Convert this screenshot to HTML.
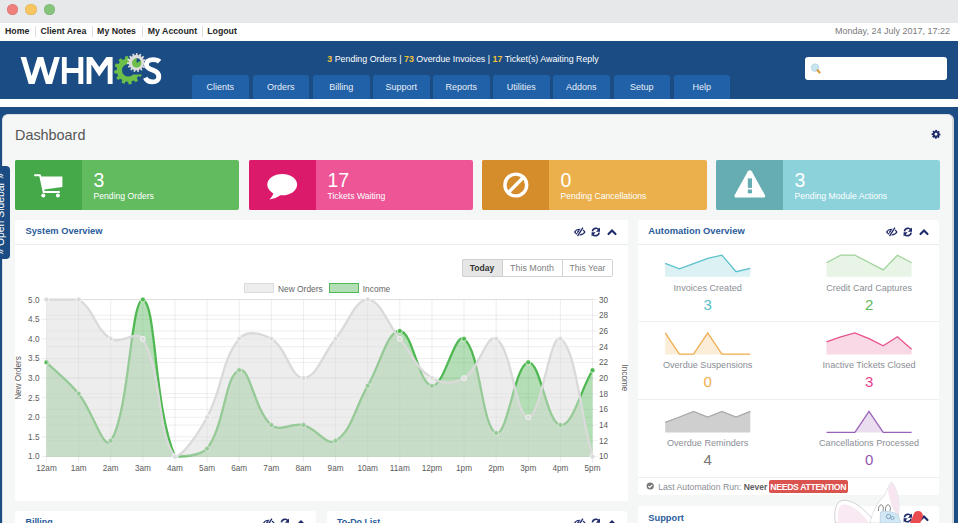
<!DOCTYPE html>
<html><head><meta charset="utf-8">
<style>
*{box-sizing:border-box;margin:0;padding:0}
html,body{width:958px;height:523px;overflow:hidden;background:#fff;font-family:"Liberation Sans",sans-serif}
.abs{position:absolute}
#macbar{left:0;top:0;width:958px;height:23px;background:#e6e8ea}
.dot{position:absolute;top:3.65px;width:11.6px;height:11.6px;border-radius:50%;box-shadow:inset 0 0 0 0.5px rgba(0,0,0,0.12)}
#topbar{left:0;top:23px;width:958px;height:18px;background:#fff}
.tl{position:absolute;top:25.4px;font-size:8.75px;font-weight:bold;color:#262626;white-space:nowrap;line-height:12px}
.tsep{position:absolute;top:26px;width:1px;height:11px;background:#dedede}
#date{right:8px;top:25px;font-size:9px;color:#7a7a7a;white-space:nowrap;line-height:12px}
#header{left:0;top:41px;width:958px;height:58px;background:#1b4d84}
#status{left:0;width:926px;top:52.5px;text-align:center;font-size:8.87px;color:#fff;white-space:nowrap;line-height:12px}
#status b{color:#f3c234}
.tab{position:absolute;top:75px;width:56.7px;height:24px;background:#2061a8;border-radius:3px 3px 0 0;color:#e9eff6;font-size:9px;text-align:center;line-height:25px}
#search{left:805px;top:57px;width:142px;height:22.5px;background:#fff;border-radius:3px}
#stripe{left:0;top:99px;width:958px;height:7.4px;background:#fff}
#bluebg{left:0;top:106.5px;width:958px;height:417px;background:#1b4d84}
#content{left:2px;top:113.6px;width:952px;height:420px;background:#f5f7f7;border-radius:6px;border:1px solid #dcdfe2;border-right:2px solid #d6d9dc}
#title{left:15px;top:125.8px;font-size:14.4px;color:#555;white-space:nowrap;line-height:18px}
.box{position:absolute;top:160px;height:49.5px;border-radius:2px;overflow:hidden}
.box .ic{position:absolute;left:0;top:0;width:67px;height:100%}
.box .num{position:absolute;left:78px;top:167.5px;font-size:19.5px;color:#fff;line-height:24px}
.box .lbl{position:absolute;left:78px;top:190px;font-size:8.65px;color:#fff;white-space:nowrap;line-height:12px}
.panel{position:absolute;background:#fff;border-radius:3px}
.ph{position:absolute;left:0;top:0;width:100%;height:24.7px;border-bottom:1px solid #e9ebed}
.pt{position:absolute;left:10.5px;top:6px;font-size:9.3px;font-weight:bold;color:#2a5c9c;white-space:nowrap;line-height:12px}
.auto{position:absolute;text-align:center;width:150px}
.auto .al{font-size:9.1px;color:#8a8d93;white-space:nowrap;line-height:12px}
.auto .av{font-size:15px;line-height:16px}
</style></head><body>
<div id="macbar" class="abs">
 <div class="dot" style="left:6.55px;background:#ef7f7a"></div>
 <div class="dot" style="left:25.2px;background:#f8c661"></div>
 <div class="dot" style="left:43.8px;background:#85c57b"></div>
</div>
<div id="topbar" class="abs"></div>
<div class="tl" style="left:5px">Home</div><div class="tsep" style="left:35px"></div>
<div class="tl" style="left:40.4px">Client Area</div><div class="tsep" style="left:92.2px"></div>
<div class="tl" style="left:97.1px">My Notes</div><div class="tsep" style="left:142.3px"></div>
<div class="tl" style="left:147.8px">My Account</div><div class="tsep" style="left:202.3px"></div>
<div class="tl" style="left:207.2px">Logout</div>
<div id="date" class="abs">Monday, 24 July 2017, 17:22</div>
<div id="header" class="abs"></div>
<svg class="abs" style="left:0;top:41px" width="200" height="58" viewBox="0 41 200 58">
<g fill="#fff">
<path d="M20.6,56.9 L26.1,56.9 L31.6,76.1 L37.5,56.9 L43.3,56.9 L48.5,76.1 L54.4,56.9 L59.9,56.9 L52.1,83.9 L45.9,83.9 L40.4,66 L34.6,83.9 L28.7,83.9 Z"/>
<path d="M61.9,56.9 H66.7 V68 H78.4 V56.9 H83.3 V83.9 H78.4 V72.9 H66.7 V83.9 H61.9 Z"/>
<path d="M86.6,83.9 L86.6,56.9 L92.2,56.9 L99.2,67 L106.4,56.9 L112.6,56.9 L112.6,83.9 L107.7,83.9 L107.7,64.6 L99.2,76.4 L91.4,64.6 L91.4,83.9 Z"/>
</g>
<path d="M139.60,72.81 L141.91,74.26 L140.84,76.87 L138.18,76.28 L136.78,78.11 L138.06,80.52 L135.82,82.24 L133.82,80.40 L131.69,81.29 L131.59,84.01 L128.80,84.39 L127.98,81.80 L125.69,81.50 L124.24,83.81 L121.63,82.74 L122.22,80.08 L120.39,78.68 L117.98,79.96 L116.26,77.72 L118.10,75.72 L117.21,73.59 L114.49,73.49 L114.11,70.70 L116.70,69.88 L117.00,67.59 L114.69,66.14 L115.76,63.53 L118.42,64.12 L119.82,62.29 L118.54,59.88 L120.78,58.16 L122.78,60.00 L124.91,59.11 L125.01,56.39 L127.80,56.01 L128.62,58.60 L130.91,58.90 L132.36,56.59 L134.97,57.66 L134.38,60.32 L136.21,61.72 L138.62,60.44 L140.34,62.68 L138.50,64.68 L139.39,66.81 L142.11,66.91 L142.49,69.70 L139.90,70.52 Z M134.60,70.20 A6.3,6.3 0 1,0 122.00,70.20 A6.3,6.3 0 1,0 134.60,70.20 Z" fill="#6cc04a" fill-rule="evenodd"/>
<path d="M128.3,70.2 L133,74.4 L150,74.4 L150,52 L133,52 Z" fill="#1b4d84"/>
<path d="M144.10,62.60 L145.99,63.08 L145.79,64.58 L143.85,64.55 L143.44,65.69 L144.97,66.90 L144.19,68.18 L142.42,67.37 L141.59,68.25 L142.49,69.97 L141.25,70.83 L139.96,69.36 L138.85,69.83 L138.98,71.77 L137.49,72.05 L136.91,70.19 L135.71,70.16 L135.03,71.99 L133.56,71.64 L133.79,69.70 L132.70,69.18 L131.34,70.58 L130.14,69.66 L131.14,67.99 L130.35,67.07 L128.54,67.79 L127.82,66.46 L129.41,65.34 L129.07,64.18 L127.12,64.11 L127.00,62.60 L128.91,62.22 L129.07,61.02 L127.32,60.16 L127.82,58.74 L129.72,59.16 L130.35,58.13 L129.10,56.64 L130.14,55.54 L131.70,56.70 L132.70,56.02 L132.17,54.14 L133.56,53.56 L134.52,55.26 L135.71,55.04 L135.98,53.11 L137.49,53.15 L137.67,55.09 L138.85,55.37 L139.89,53.72 L141.25,54.37 L140.63,56.22 L141.59,56.95 L143.20,55.87 L144.19,57.02 L142.87,58.45 L143.44,59.51 L145.36,59.18 L145.79,60.62 L144.00,61.40 Z" fill="#dcdcdc"/>
<circle cx="136.6" cy="63" r="4.7" fill="#6cc04a"/>
<path d="M136.6,63 L136.6,58.3 A4.7,4.7 0 0,1 140.7,60.7 Z" fill="#1b4d84"/>
<path d="M159.6,61.6 C157.8,59.9 155.2,59.6 152.8,59.6 C149,59.6 146.4,61.4 146.4,64.6 C146.4,68.2 150,69.3 152.9,70.2 C156.1,71.2 158.8,72.6 158.8,76.9 C158.8,80.1 156.1,81.9 152.5,81.9 C149.2,81.9 146.6,80.6 145.3,77.8" fill="none" stroke="#fff" stroke-width="4.9"/>
</svg>
<div id="status" class="abs"><b>3</b> Pending Orders | <b>73</b> Overdue Invoices | <b>17</b> Ticket(s) Awaiting Reply</div>
<div class="tab" style="left:192px">Clients</div>
<div class="tab" style="left:252.5px">Orders</div>
<div class="tab" style="left:313px">Billing</div>
<div class="tab" style="left:373px">Support</div>
<div class="tab" style="left:433px">Reports</div>
<div class="tab" style="left:493px">Utilities</div>
<div class="tab" style="left:553px">Addons</div>
<div class="tab" style="left:613.5px">Setup</div>
<div class="tab" style="left:673.5px">Help</div>
<div id="search" class="abs"><svg width="30" height="23" style="position:absolute;left:0;top:0"><circle cx="10.1" cy="10.6" r="3.9" fill="#c8e4ee" stroke="#b4d3df" stroke-width="0.6"/><path d="M12.6,13.2 L14.6,15.4" stroke="#d99b3c" stroke-width="2.2" stroke-linecap="round"/></svg></div>
<div id="stripe" class="abs"></div>
<div id="bluebg" class="abs"></div>
<div id="content" class="abs"></div>
<div id="title" class="abs">Dashboard</div>
<svg class="abs" style="left:926px;top:124px" width="20" height="20" viewBox="926 124 20 20"><path d="M939.30,133.48 L940.45,133.63 L940.37,135.38 L939.21,135.42 L938.91,136.05 L939.62,136.97 L938.32,138.15 L937.47,137.36 L936.82,137.60 L936.67,138.75 L934.92,138.67 L934.88,137.51 L934.25,137.21 L933.33,137.92 L932.15,136.62 L932.94,135.77 L932.70,135.12 L931.55,134.97 L931.63,133.22 L932.79,133.18 L933.09,132.55 L932.38,131.63 L933.68,130.45 L934.53,131.24 L935.18,131.00 L935.33,129.85 L937.08,129.93 L937.12,131.09 L937.75,131.39 L938.67,130.68 L939.85,131.98 L939.06,132.83 Z M937.45,134.30 A1.45,1.45 0 1,0 934.55,134.30 A1.45,1.45 0 1,0 937.45,134.30 Z" fill="#1e2a69" fill-rule="evenodd"/></svg>
<div class="box" style="left:15px;width:224px;background:#62bb5f"><div class="ic" style="background:#45a94a"><svg width="67" height="50" viewBox="15 160 67 50" style="position:absolute;left:0;top:0"><g fill="#fff">
<path d="M34.2,174.3 H39.6 C40.4,174.3 40.9,174.7 41.1,175.4 L41.3,176.4 H62.4 V186.9 L44.3,189.5 L44.6,191 H59.8 V193 H42.9 L39.3,176.3 H34.2 Z"/>
<circle cx="43.3" cy="195.6" r="2"/><circle cx="57.9" cy="195.6" r="2"/></g></svg></div></div>
<div class="box" style="left:249px;width:224px;background:#ee5597"><div class="ic" style="background:#db1a6c"><svg width="67" height="50" viewBox="249 160 67 50" style="position:absolute;left:0;top:0"><g fill="#fff">
<ellipse cx="282.2" cy="184.6" rx="14.9" ry="10.7"/>
<path d="M273.5,192 C273.2,195 271.8,197.5 269.4,199.4 C273.6,199 277.6,197.4 280.8,194.8 Z"/></g></svg></div></div>
<div class="box" style="left:482px;width:225px;background:#ebb04b"><div class="ic" style="background:#d58d2b"><svg width="67" height="50" viewBox="482 160 67 50" style="position:absolute;left:0;top:0"><g fill="none" stroke="#fff" stroke-width="3.4">
<circle cx="515.8" cy="185" r="10.9"/><path d="M523.5,177.3 L508.1,192.7"/></g></svg></div></div>
<div class="box" style="left:716px;width:224px;background:#8bd2da"><div class="ic" style="background:#66adb3"><svg width="67" height="50" viewBox="716 160 67 50" style="position:absolute;left:0;top:0">
<path d="M749.8,170.2 C750.6,170.2 751.3,170.6 751.7,171.3 L764.9,195 C765.6,196.3 764.9,197.6 763.4,197.6 H736.2 C734.7,197.6 734,196.3 734.7,195 L747.9,171.3 C748.3,170.6 749,170.2 749.8,170.2 Z" fill="#fff"/>
<rect x="747.8" y="178.4" width="4.2" height="9.5" fill="#66adb3"/><rect x="747.8" y="189.5" width="4.2" height="3.8" fill="#66adb3"/></svg></div></div>
<div class="abs" style="left:93.5px;top:168.24px;font-size:19.5px;line-height:24px;color:#fff">3</div>
<div class="abs" style="left:93.5px;top:189.90px;font-size:8.65px;line-height:12px;color:#fff;white-space:nowrap">Pending Orders</div>
<div class="abs" style="left:327.5px;top:168.24px;font-size:19.5px;line-height:24px;color:#fff">17</div>
<div class="abs" style="left:327.5px;top:189.90px;font-size:8.65px;line-height:12px;color:#fff;white-space:nowrap">Tickets Waiting</div>
<div class="abs" style="left:560.5px;top:168.24px;font-size:19.5px;line-height:24px;color:#fff">0</div>
<div class="abs" style="left:560.5px;top:189.90px;font-size:8.65px;line-height:12px;color:#fff;white-space:nowrap">Pending Cancellations</div>
<div class="abs" style="left:794.5px;top:168.24px;font-size:19.5px;line-height:24px;color:#fff">3</div>
<div class="abs" style="left:794.5px;top:189.90px;font-size:8.65px;line-height:12px;color:#fff;white-space:nowrap">Pending Module Actions</div>
<div class="abs" style="left:0;top:165.5px;width:9.5px;height:93px;background:#1b4d84;border-radius:0 4px 4px 0"></div>
<div class="abs" style="left:-53.6px;top:208px;width:110px;height:12px;transform:rotate(-90deg);font-size:10.4px;line-height:12px;color:#fff;text-align:center;white-space:nowrap">&raquo; Open Sidebar &raquo;</div>
<div class="panel" style="left:15px;top:220px;width:612.5px;height:281px"><div class="ph"></div></div>
<div class="abs" style="left:25.5px;top:225.38px;font-size:9.3px;line-height:12px;font-weight:bold;color:#2a5c9c;white-space:nowrap">System Overview</div>
<svg class="abs" style="left:572.2px;top:225px" width="46" height="14" viewBox="572.2 225 46 14" fill="#1e2a69">
<path d="M574.9,232 C576.8,228.3 583.2,228.3 585.1,232 C583.2,235.7 576.8,235.7 574.9,232 Z" fill="none" stroke="#1e2a69" stroke-width="1.2"/>
<circle cx="579.2" cy="231.9" r="1.9"/>
<path d="M583.3,227.4 L577.5,236.4" stroke="#fff" stroke-width="2.6"/>
<path d="M583.1,227.7 L577.7,236.1" stroke="#1e2a69" stroke-width="1.3"/>
<g fill="none" stroke="#1e2a69" stroke-width="1.7"><path d="M599.1,229.8 A3.6,3.6 0 0,0 592.6,231.4"/><path d="M592.9,234.2 A3.6,3.6 0 0,0 599.4,232.6"/></g>
<path d="M600.2,227.6 V231.7 H596.1 Z M591.8,236.4 V232.3 H595.9 Z"/>
<path d="M608.7,234.1 L612.2,230.5 L615.7,234.1" fill="none" stroke="#1e2a69" stroke-width="2.1" stroke-linecap="round" stroke-linejoin="miter"/>
</svg>
<div class="abs" style="left:461.5px;top:259px;width:151.5px;height:17.5px;border:1px solid #d4d4d4;border-radius:2px;background:#fff"></div>
<div class="abs" style="left:461.5px;top:259px;width:41px;height:17.5px;border:1px solid #cfcfcf;border-radius:2px 0 0 2px;background:#e6e6e6;font-size:8.55px;font-weight:bold;color:#333;text-align:center;line-height:17px">Today</div>
<div class="abs" style="left:561.5px;top:260px;width:1px;height:15.5px;background:#d4d4d4"></div>
<div class="abs" style="left:502.5px;top:259px;width:59px;height:17.5px;font-size:8.9px;color:#808080;text-align:center;line-height:19.4px">This Month</div>
<div class="abs" style="left:562px;top:259px;width:51px;height:17.5px;font-size:8.6px;color:#808080;text-align:center;line-height:19.4px">This Year</div>
<div class="abs" style="left:244.2px;top:283.3px;width:30.2px;height:9.8px;background:rgba(220,220,220,0.5);border:1.3px solid #dcdcdc"></div>
<div class="abs" style="left:278px;top:283.29px;font-size:8.4px;line-height:12px;color:#666;white-space:nowrap">New Orders</div>
<div class="abs" style="left:329px;top:283.3px;width:30.2px;height:9.8px;background:rgba(88,182,90,0.45);border:1.8px solid rgb(80,184,83)"></div>
<div class="abs" style="left:362.8px;top:283.29px;font-size:8.4px;line-height:12px;color:#666;white-space:nowrap">Income</div>
<svg class="abs" style="left:0;top:0" width="958" height="523"><g stroke="rgba(0,0,0,0.1)" stroke-width="0.7"><line x1="41.5" y1="299.60" x2="592.5" y2="299.60"/><line x1="41.5" y1="319.21" x2="592.5" y2="319.21"/><line x1="41.5" y1="338.83" x2="592.5" y2="338.83"/><line x1="41.5" y1="358.44" x2="592.5" y2="358.44"/><line x1="41.5" y1="378.05" x2="592.5" y2="378.05"/><line x1="41.5" y1="397.66" x2="592.5" y2="397.66"/><line x1="41.5" y1="417.27" x2="592.5" y2="417.27"/><line x1="41.5" y1="436.89" x2="592.5" y2="436.89"/><line x1="41.5" y1="456.50" x2="592.5" y2="456.50"/><line x1="46.5" y1="299.60" x2="597.5" y2="299.60"/><line x1="46.5" y1="315.29" x2="597.5" y2="315.29"/><line x1="46.5" y1="330.98" x2="597.5" y2="330.98"/><line x1="46.5" y1="346.67" x2="597.5" y2="346.67"/><line x1="46.5" y1="362.36" x2="597.5" y2="362.36"/><line x1="46.5" y1="378.05" x2="597.5" y2="378.05"/><line x1="46.5" y1="393.74" x2="597.5" y2="393.74"/><line x1="46.5" y1="409.43" x2="597.5" y2="409.43"/><line x1="46.5" y1="425.12" x2="597.5" y2="425.12"/><line x1="46.5" y1="440.81" x2="597.5" y2="440.81"/><line x1="46.5" y1="456.50" x2="597.5" y2="456.50"/><line x1="46.50" y1="299.6" x2="46.50" y2="462.5"/><line x1="78.62" y1="299.6" x2="78.62" y2="462.5"/><line x1="110.74" y1="299.6" x2="110.74" y2="462.5"/><line x1="142.85" y1="299.6" x2="142.85" y2="462.5"/><line x1="174.97" y1="299.6" x2="174.97" y2="462.5"/><line x1="207.09" y1="299.6" x2="207.09" y2="462.5"/><line x1="239.21" y1="299.6" x2="239.21" y2="462.5"/><line x1="271.32" y1="299.6" x2="271.32" y2="462.5"/><line x1="303.44" y1="299.6" x2="303.44" y2="462.5"/><line x1="335.56" y1="299.6" x2="335.56" y2="462.5"/><line x1="367.68" y1="299.6" x2="367.68" y2="462.5"/><line x1="399.79" y1="299.6" x2="399.79" y2="462.5"/><line x1="431.91" y1="299.6" x2="431.91" y2="462.5"/><line x1="464.03" y1="299.6" x2="464.03" y2="462.5"/><line x1="496.15" y1="299.6" x2="496.15" y2="462.5"/><line x1="528.26" y1="299.6" x2="528.26" y2="462.5"/><line x1="560.38" y1="299.6" x2="560.38" y2="462.5"/><line x1="592.50" y1="299.6" x2="592.50" y2="462.5"/></g>
<path d="M46.50,362.36 C59.35,374.91 67.29,379.91 78.62,393.74 C92.99,411.29 103.48,451.44 110.74,440.81 C129.17,413.79 130.65,299.60 142.85,299.60 C156.35,302.90 153.67,407.08 174.97,456.50 C179.37,456.50 199.88,456.50 207.09,448.65 C225.57,423.82 224.53,375.58 239.21,370.21 C250.22,366.17 254.25,410.52 271.32,425.12 C279.94,432.49 291.28,422.15 303.44,425.12 C316.97,428.43 326.32,446.45 335.56,440.81 C352.01,430.76 354.83,407.86 367.68,385.89 C380.52,363.93 386.95,330.98 399.79,330.98 C412.64,330.98 418.36,384.24 431.91,385.89 C444.05,387.38 454.67,331.97 464.03,338.83 C480.37,350.80 481.71,427.68 496.15,432.97 C507.40,437.09 514.80,364.00 528.26,362.36 C540.50,360.87 546.88,423.47 560.38,425.12 C572.57,426.61 579.65,392.17 592.50,370.21 L592.5,456.5 L46.5,456.5 Z" fill="rgba(88,182,90,0.45)"/>
<path d="M46.50,362.36 C59.35,374.91 67.29,379.91 78.62,393.74 C92.99,411.29 103.48,451.44 110.74,440.81 C129.17,413.79 130.65,299.60 142.85,299.60 C156.35,302.90 153.67,407.08 174.97,456.50 C179.37,456.50 199.88,456.50 207.09,448.65 C225.57,423.82 224.53,375.58 239.21,370.21 C250.22,366.17 254.25,410.52 271.32,425.12 C279.94,432.49 291.28,422.15 303.44,425.12 C316.97,428.43 326.32,446.45 335.56,440.81 C352.01,430.76 354.83,407.86 367.68,385.89 C380.52,363.93 386.95,330.98 399.79,330.98 C412.64,330.98 418.36,384.24 431.91,385.89 C444.05,387.38 454.67,331.97 464.03,338.83 C480.37,350.80 481.71,427.68 496.15,432.97 C507.40,437.09 514.80,364.00 528.26,362.36 C540.50,360.87 546.88,423.47 560.38,425.12 C572.57,426.61 579.65,392.17 592.50,370.21" fill="none" stroke="rgb(80,184,83)" stroke-width="2.3"/>
<circle cx="46.50" cy="362.36" r="2.5" fill="rgb(80,184,83)" stroke="#fff" stroke-width="0.7"/><circle cx="78.62" cy="393.74" r="2.5" fill="rgb(80,184,83)" stroke="#fff" stroke-width="0.7"/><circle cx="110.74" cy="440.81" r="2.5" fill="rgb(80,184,83)" stroke="#fff" stroke-width="0.7"/><circle cx="142.85" cy="299.60" r="2.5" fill="rgb(80,184,83)" stroke="#fff" stroke-width="0.7"/><circle cx="174.97" cy="456.50" r="2.5" fill="rgb(80,184,83)" stroke="#fff" stroke-width="0.7"/><circle cx="207.09" cy="448.65" r="2.5" fill="rgb(80,184,83)" stroke="#fff" stroke-width="0.7"/><circle cx="239.21" cy="370.21" r="2.5" fill="rgb(80,184,83)" stroke="#fff" stroke-width="0.7"/><circle cx="271.32" cy="425.12" r="2.5" fill="rgb(80,184,83)" stroke="#fff" stroke-width="0.7"/><circle cx="303.44" cy="425.12" r="2.5" fill="rgb(80,184,83)" stroke="#fff" stroke-width="0.7"/><circle cx="335.56" cy="440.81" r="2.5" fill="rgb(80,184,83)" stroke="#fff" stroke-width="0.7"/><circle cx="367.68" cy="385.89" r="2.5" fill="rgb(80,184,83)" stroke="#fff" stroke-width="0.7"/><circle cx="399.79" cy="330.98" r="2.5" fill="rgb(80,184,83)" stroke="#fff" stroke-width="0.7"/><circle cx="431.91" cy="385.89" r="2.5" fill="rgb(80,184,83)" stroke="#fff" stroke-width="0.7"/><circle cx="464.03" cy="338.83" r="2.5" fill="rgb(80,184,83)" stroke="#fff" stroke-width="0.7"/><circle cx="496.15" cy="432.97" r="2.5" fill="rgb(80,184,83)" stroke="#fff" stroke-width="0.7"/><circle cx="528.26" cy="362.36" r="2.5" fill="rgb(80,184,83)" stroke="#fff" stroke-width="0.7"/><circle cx="560.38" cy="425.12" r="2.5" fill="rgb(80,184,83)" stroke="#fff" stroke-width="0.7"/><circle cx="592.50" cy="370.21" r="2.5" fill="rgb(80,184,83)" stroke="#fff" stroke-width="0.7"/>
<path d="M46.50,299.60 C59.35,299.60 68.65,299.60 78.62,299.60 C94.35,309.20 95.01,329.22 110.74,338.83 C120.70,344.91 137.50,329.01 142.85,338.83 C163.19,376.08 156.82,434.33 174.97,456.50 C182.51,456.50 197.47,434.89 207.09,417.27 C223.17,387.82 220.57,361.58 239.21,338.83 C246.27,330.20 261.36,332.74 271.32,338.83 C287.05,348.43 290.59,378.05 303.44,378.05 C316.29,378.05 322.71,354.52 335.56,338.83 C348.41,323.14 354.83,299.60 367.68,299.60 C380.52,299.60 386.95,323.14 399.79,338.83 C412.64,354.52 416.18,368.45 431.91,378.05 C441.88,384.14 454.06,384.14 464.03,378.05 C479.76,368.45 486.53,332.95 496.15,338.83 C512.23,348.64 515.42,417.27 528.26,417.27 C541.11,417.27 549.85,332.39 560.38,338.83 C575.54,348.08 579.65,409.43 592.50,456.50 L592.5,456.5 L46.5,456.5 Z" fill="rgba(220,220,220,0.5)"/>
<path d="M46.50,299.60 C59.35,299.60 68.65,299.60 78.62,299.60 C94.35,309.20 95.01,329.22 110.74,338.83 C120.70,344.91 137.50,329.01 142.85,338.83 C163.19,376.08 156.82,434.33 174.97,456.50 C182.51,456.50 197.47,434.89 207.09,417.27 C223.17,387.82 220.57,361.58 239.21,338.83 C246.27,330.20 261.36,332.74 271.32,338.83 C287.05,348.43 290.59,378.05 303.44,378.05 C316.29,378.05 322.71,354.52 335.56,338.83 C348.41,323.14 354.83,299.60 367.68,299.60 C380.52,299.60 386.95,323.14 399.79,338.83 C412.64,354.52 416.18,368.45 431.91,378.05 C441.88,384.14 454.06,384.14 464.03,378.05 C479.76,368.45 486.53,332.95 496.15,338.83 C512.23,348.64 515.42,417.27 528.26,417.27 C541.11,417.27 549.85,332.39 560.38,338.83 C575.54,348.08 579.65,409.43 592.50,456.50" fill="none" stroke="rgb(218,218,218)" stroke-width="2.3"/>
<circle cx="46.50" cy="299.60" r="2.5" fill="rgb(218,218,218)" stroke="#fff" stroke-width="0.7"/><circle cx="78.62" cy="299.60" r="2.5" fill="rgb(218,218,218)" stroke="#fff" stroke-width="0.7"/><circle cx="110.74" cy="338.83" r="2.5" fill="rgb(218,218,218)" stroke="#fff" stroke-width="0.7"/><circle cx="142.85" cy="338.83" r="2.5" fill="rgb(218,218,218)" stroke="#fff" stroke-width="0.7"/><circle cx="174.97" cy="456.50" r="2.5" fill="rgb(218,218,218)" stroke="#fff" stroke-width="0.7"/><circle cx="207.09" cy="417.27" r="2.5" fill="rgb(218,218,218)" stroke="#fff" stroke-width="0.7"/><circle cx="239.21" cy="338.83" r="2.5" fill="rgb(218,218,218)" stroke="#fff" stroke-width="0.7"/><circle cx="271.32" cy="338.83" r="2.5" fill="rgb(218,218,218)" stroke="#fff" stroke-width="0.7"/><circle cx="303.44" cy="378.05" r="2.5" fill="rgb(218,218,218)" stroke="#fff" stroke-width="0.7"/><circle cx="335.56" cy="338.83" r="2.5" fill="rgb(218,218,218)" stroke="#fff" stroke-width="0.7"/><circle cx="367.68" cy="299.60" r="2.5" fill="rgb(218,218,218)" stroke="#fff" stroke-width="0.7"/><circle cx="399.79" cy="338.83" r="2.5" fill="rgb(218,218,218)" stroke="#fff" stroke-width="0.7"/><circle cx="431.91" cy="378.05" r="2.5" fill="rgb(218,218,218)" stroke="#fff" stroke-width="0.7"/><circle cx="464.03" cy="378.05" r="2.5" fill="rgb(218,218,218)" stroke="#fff" stroke-width="0.7"/><circle cx="496.15" cy="338.83" r="2.5" fill="rgb(218,218,218)" stroke="#fff" stroke-width="0.7"/><circle cx="528.26" cy="417.27" r="2.5" fill="rgb(218,218,218)" stroke="#fff" stroke-width="0.7"/><circle cx="560.38" cy="338.83" r="2.5" fill="rgb(218,218,218)" stroke="#fff" stroke-width="0.7"/><circle cx="592.50" cy="456.50" r="2.5" fill="rgb(218,218,218)" stroke="#fff" stroke-width="0.7"/>
<g font-family="Liberation Sans" font-size="8.2" fill="#5c5c5c"><text x="39.5" y="302.50" text-anchor="end">5.0</text><text x="39.5" y="322.11" text-anchor="end">4.5</text><text x="39.5" y="341.73" text-anchor="end">4.0</text><text x="39.5" y="361.34" text-anchor="end">3.5</text><text x="39.5" y="380.95" text-anchor="end">3.0</text><text x="39.5" y="400.56" text-anchor="end">2.5</text><text x="39.5" y="420.17" text-anchor="end">2.0</text><text x="39.5" y="439.79" text-anchor="end">1.5</text><text x="39.5" y="459.40" text-anchor="end">1.0</text><text x="599.0" y="302.50">30</text><text x="599.0" y="318.19">28</text><text x="599.0" y="333.88">26</text><text x="599.0" y="349.57">24</text><text x="599.0" y="365.26">22</text><text x="599.0" y="380.95">20</text><text x="599.0" y="396.64">18</text><text x="599.0" y="412.33">16</text><text x="599.0" y="428.02">14</text><text x="599.0" y="443.71">12</text><text x="599.0" y="459.40">10</text><text x="46.50" y="471" text-anchor="middle">12am</text><text x="78.62" y="471" text-anchor="middle">1am</text><text x="110.74" y="471" text-anchor="middle">2am</text><text x="142.85" y="471" text-anchor="middle">3am</text><text x="174.97" y="471" text-anchor="middle">4am</text><text x="207.09" y="471" text-anchor="middle">5am</text><text x="239.21" y="471" text-anchor="middle">6am</text><text x="271.32" y="471" text-anchor="middle">7am</text><text x="303.44" y="471" text-anchor="middle">8am</text><text x="335.56" y="471" text-anchor="middle">9am</text><text x="367.68" y="471" text-anchor="middle">10am</text><text x="399.79" y="471" text-anchor="middle">11am</text><text x="431.91" y="471" text-anchor="middle">12pm</text><text x="464.03" y="471" text-anchor="middle">1pm</text><text x="496.15" y="471" text-anchor="middle">2pm</text><text x="528.26" y="471" text-anchor="middle">3pm</text><text x="560.38" y="471" text-anchor="middle">4pm</text><text x="592.50" y="471" text-anchor="middle">5pm</text><text transform="translate(21,378) rotate(-90)" text-anchor="middle">New Orders</text><text transform="translate(622,378) rotate(90)" text-anchor="middle">Income</text></g></svg>
<div class="panel" style="left:638px;top:220px;width:301px;height:275px"><div class="ph"></div></div>
<div class="abs" style="left:648.3px;top:224.98px;font-size:9.4px;line-height:12px;font-weight:bold;color:#2a5c9c;white-space:nowrap">Automation Overview</div>
<svg class="abs" style="left:883.7px;top:225px" width="46" height="14" viewBox="883.7 225 46 14" fill="#1e2a69">
<path d="M886.4,232 C888.3,228.3 894.7,228.3 896.6,232 C894.7,235.7 888.3,235.7 886.4,232 Z" fill="none" stroke="#1e2a69" stroke-width="1.2"/>
<circle cx="890.7" cy="231.9" r="1.9"/>
<path d="M894.8,227.4 L889.0,236.4" stroke="#fff" stroke-width="2.6"/>
<path d="M894.6,227.7 L889.2,236.1" stroke="#1e2a69" stroke-width="1.3"/>
<g fill="none" stroke="#1e2a69" stroke-width="1.7"><path d="M910.6,229.8 A3.6,3.6 0 0,0 904.1,231.4"/><path d="M904.4,234.2 A3.6,3.6 0 0,0 910.9,232.6"/></g>
<path d="M911.7,227.6 V231.7 H907.6 Z M903.3,236.4 V232.3 H907.4 Z"/>
<path d="M920.2,234.1 L923.7,230.5 L927.2,234.1" fill="none" stroke="#1e2a69" stroke-width="2.1" stroke-linecap="round" stroke-linejoin="miter"/>
</svg>
<div class="abs" style="left:638px;top:321.0px;width:301px;height:1px;background:#eceef0"></div>
<div class="abs" style="left:638px;top:398.5px;width:301px;height:1px;background:#eceef0"></div>
<div class="abs" style="left:638px;top:476.5px;width:301px;height:1px;background:#eceef0"></div>
<svg class="abs" style="left:0;top:0" width="958" height="523"><path d="M665.2,263.4 L679.4,268.9 L693.6,263.6 L707.7,258.3 L721.9,255.2 L736.1,271.7 L750.3,268.4 L750.3,276.8 L665.2,276.8 Z" fill="rgba(91,192,204,0.22)"/><path d="M665.2,263.4 L679.4,268.9 L693.6,263.6 L707.7,258.3 L721.9,255.2 L736.1,271.7 L750.3,268.4" fill="none" stroke="#5bc0cc" stroke-width="1.3" stroke-linejoin="miter"/><path d="M826.5,262.7 L840.7,255.2 L854.9,255.2 L869.0,262.5 L883.2,269.9 L897.4,255.2 L911.6,262.7 L911.6,276.8 L826.5,276.8 Z" fill="rgba(159,211,155,0.25)"/><path d="M826.5,262.7 L840.7,255.2 L854.9,255.2 L869.0,262.5 L883.2,269.9 L897.4,255.2 L911.6,262.7" fill="none" stroke="#9fd39b" stroke-width="1.3" stroke-linejoin="miter"/><path d="M665.2,332.8 L679.4,354.1 L693.6,354.1 L707.7,332.8 L721.9,354.1 L736.1,354.1 L750.3,354.1 L750.3,354.4 L665.2,354.4 Z" fill="rgba(240,173,78,0.22)"/><path d="M665.2,332.8 L679.4,354.1 L693.6,354.1 L707.7,332.8 L721.9,354.1 L736.1,354.1 L750.3,354.1" fill="none" stroke="#f0ad4e" stroke-width="1.3" stroke-linejoin="miter"/><path d="M826.5,341.9 L840.7,336.8 L854.9,332.9 L869.0,338.6 L883.2,345.8 L897.4,336.7 L911.6,349.3 L911.6,354.4 L826.5,354.4 Z" fill="rgba(231,82,143,0.22)"/><path d="M826.5,341.9 L840.7,336.8 L854.9,332.9 L869.0,338.6 L883.2,345.8 L897.4,336.7 L911.6,349.3" fill="none" stroke="#e7528f" stroke-width="1.3" stroke-linejoin="miter"/><path d="M665.2,422.4 L679.4,417.0 L693.6,411.4 L707.7,417.0 L721.9,411.4 L736.1,417.0 L750.3,411.4 L750.3,432.4 L665.2,432.4 Z" fill="rgba(160,160,160,0.5)"/><path d="M665.2,422.4 L679.4,417.0 L693.6,411.4 L707.7,417.0 L721.9,411.4 L736.1,417.0 L750.3,411.4" fill="none" stroke="#a8a8a8" stroke-width="1.3" stroke-linejoin="miter"/><path d="M826.5,432.4 L840.7,432.4 L854.9,432.4 L869.0,411.4 L883.2,432.4 L897.4,432.4 L911.6,432.4 L911.6,432.4 L826.5,432.4 Z" fill="rgba(154,98,184,0.22)"/><path d="M826.5,432.4 L840.7,432.4 L854.9,432.4 L869.0,411.4 L883.2,432.4 L897.4,432.4 L911.6,432.4" fill="none" stroke="#9a62b8" stroke-width="1.3" stroke-linejoin="miter"/></svg>
<div class="abs" style="left:647.7px;width:120px;text-align:center;top:281.75px;font-size:9.1px;line-height:12px;color:#8b8e95;white-space:nowrap">Invoices Created</div>
<div class="abs" style="left:677.7px;width:60px;text-align:center;top:295.80px;font-size:15px;line-height:18px;color:#5bc0c8">3</div>
<div class="abs" style="left:809.1px;width:120px;text-align:center;top:281.75px;font-size:9.1px;line-height:12px;color:#8b8e95;white-space:nowrap">Credit Card Captures</div>
<div class="abs" style="left:839.1px;width:60px;text-align:center;top:295.80px;font-size:15px;line-height:18px;color:#5cb85c">2</div>
<div class="abs" style="left:647.7px;width:120px;text-align:center;top:359.25px;font-size:9.1px;line-height:12px;color:#8b8e95;white-space:nowrap">Overdue Suspensions</div>
<div class="abs" style="left:677.7px;width:60px;text-align:center;top:372.90px;font-size:15px;line-height:18px;color:#f0ad4e">0</div>
<div class="abs" style="left:809.1px;width:120px;text-align:center;top:359.25px;font-size:9.1px;line-height:12px;color:#8b8e95;white-space:nowrap">Inactive Tickets Closed</div>
<div class="abs" style="left:839.1px;width:60px;text-align:center;top:372.90px;font-size:15px;line-height:18px;color:#e83e8c">3</div>
<div class="abs" style="left:647.7px;width:120px;text-align:center;top:436.85px;font-size:9.1px;line-height:12px;color:#8b8e95;white-space:nowrap">Overdue Reminders</div>
<div class="abs" style="left:677.7px;width:60px;text-align:center;top:451.30px;font-size:15px;line-height:18px;color:#777">4</div>
<div class="abs" style="left:809.1px;width:120px;text-align:center;top:436.85px;font-size:9.1px;line-height:12px;color:#8b8e95;white-space:nowrap">Cancellations Processed</div>
<div class="abs" style="left:839.1px;width:60px;text-align:center;top:451.30px;font-size:15px;line-height:18px;color:#9257b0">0</div>
<svg class="abs" style="left:644px;top:482px" width="12" height="9" viewBox="644 482 12 9"><circle cx="650.2" cy="486" r="3.6" fill="#777"/><path d="M648.3,486 L649.7,487.4 L652.2,484.8" fill="none" stroke="#fff" stroke-width="1.1"/></svg>
<div class="abs" style="left:658.2px;top:480.59px;font-size:8.7px;line-height:12px;color:#8b8e95;white-space:nowrap">Last Automation Run: <b style="color:#606060;font-size:8.5px">Never</b></div>
<div class="abs" style="left:769px;top:479.7px;width:78.5px;height:13.8px;background:#d9534f;border-radius:2px;color:#fff;font-weight:bold;font-size:8.7px;letter-spacing:-0.35px;line-height:14px;text-align:center;white-space:nowrap">NEEDS ATTENTION</div>
<div class="panel" style="left:15px;top:510.7px;width:301px;height:40px"></div>
<div class="panel" style="left:326.5px;top:510.7px;width:300.5px;height:40px"></div>
<div class="panel" style="left:638px;top:505.6px;width:301px;height:40px"></div>
<div class="abs" style="left:25.5px;top:516.48px;font-size:8.9px;line-height:12px;font-weight:bold;color:#2a5c9c">Billing</div>
<div class="abs" style="left:337px;top:516.48px;font-size:8.9px;line-height:12px;font-weight:bold;color:#2a5c9c">To-Do List</div>
<div class="abs" style="left:648.3px;top:511.78px;font-size:9.3px;line-height:12px;font-weight:bold;color:#2a5c9c">Support</div>
<svg class="abs" style="left:260.7px;top:515.5px" width="46" height="14" viewBox="260.7 515.5 46 14" fill="#1e2a69">
<path d="M263.4,522.5 C265.3,518.8 271.7,518.8 273.6,522.5 C271.7,526.2 265.3,526.2 263.4,522.5 Z" fill="none" stroke="#1e2a69" stroke-width="1.2"/>
<circle cx="267.7" cy="522.4" r="1.9"/>
<path d="M271.8,517.9 L266.0,526.9" stroke="#fff" stroke-width="2.6"/>
<path d="M271.6,518.2 L266.2,526.6" stroke="#1e2a69" stroke-width="1.3"/>
<g fill="none" stroke="#1e2a69" stroke-width="1.7"><path d="M287.6,520.3 A3.6,3.6 0 0,0 281.1,521.9"/><path d="M281.4,524.7 A3.6,3.6 0 0,0 287.9,523.1"/></g>
<path d="M288.7,518.1 V522.2 H284.6 Z M280.3,526.9 V522.8 H284.4 Z"/>
<path d="M297.2,524.6 L300.7,521.0 L304.2,524.6" fill="none" stroke="#1e2a69" stroke-width="2.1" stroke-linecap="round" stroke-linejoin="miter"/>
</svg>
<svg class="abs" style="left:572.2px;top:515.5px" width="46" height="14" viewBox="572.2 515.5 46 14" fill="#1e2a69">
<path d="M574.9,522.5 C576.8,518.8 583.2,518.8 585.1,522.5 C583.2,526.2 576.8,526.2 574.9,522.5 Z" fill="none" stroke="#1e2a69" stroke-width="1.2"/>
<circle cx="579.2" cy="522.4" r="1.9"/>
<path d="M583.3,517.9 L577.5,526.9" stroke="#fff" stroke-width="2.6"/>
<path d="M583.1,518.2 L577.7,526.6" stroke="#1e2a69" stroke-width="1.3"/>
<g fill="none" stroke="#1e2a69" stroke-width="1.7"><path d="M599.1,520.3 A3.6,3.6 0 0,0 592.6,521.9"/><path d="M592.9,524.7 A3.6,3.6 0 0,0 599.4,523.1"/></g>
<path d="M600.2,518.1 V522.2 H596.1 Z M591.8,526.9 V522.8 H595.9 Z"/>
<path d="M608.7,524.6 L612.2,521.0 L615.7,524.6" fill="none" stroke="#1e2a69" stroke-width="2.1" stroke-linecap="round" stroke-linejoin="miter"/>
</svg>
<svg class="abs" style="left:883.7px;top:510.5px" width="46" height="14" viewBox="883.7 510.5 46 14" fill="#1e2a69">
<path d="M886.4,517.5 C888.3,513.8 894.7,513.8 896.6,517.5 C894.7,521.2 888.3,521.2 886.4,517.5 Z" fill="none" stroke="#1e2a69" stroke-width="1.2"/>
<circle cx="890.7" cy="517.4" r="1.9"/>
<path d="M894.8,512.9 L889.0,521.9" stroke="#fff" stroke-width="2.6"/>
<path d="M894.6,513.2 L889.2,521.6" stroke="#1e2a69" stroke-width="1.3"/>
<g fill="none" stroke="#1e2a69" stroke-width="1.7"><path d="M910.6,515.3 A3.6,3.6 0 0,0 904.1,516.9"/><path d="M904.4,519.7 A3.6,3.6 0 0,0 910.9,518.1"/></g>
<path d="M911.7,513.1 V517.2 H907.6 Z M903.3,521.9 V517.8 H907.4 Z"/>
<path d="M920.2,519.6 L923.7,516.0 L927.2,519.6" fill="none" stroke="#1e2a69" stroke-width="2.1" stroke-linecap="round" stroke-linejoin="miter"/>
</svg>
<svg class="abs" style="left:825px;top:470px" width="115" height="53" viewBox="825 470 115 53">
<path d="M835.5,523 C833.5,512 835.5,502 842,500.5 C851,499 864,507 875,523 Z" fill="#fff" stroke="#cdcbd2" stroke-width="0.9"/><path d="M838.5,523 C837,513 838.5,505.5 843,504.5 C850,503.5 861,511 869,523 Z" fill="#f9e9f2"/>
<path d="M870,523 C872,512 877,503 884,496 C887,490 889,485 891.6,481.8 C896,487 899,497 899,507 C899,513 898,518 897,523 Z" fill="#fff" stroke="#d9d4dc" stroke-width="0.7"/>
<path d="M891.6,482 C895.5,487 898.6,497 898.6,507 C898.6,511 897.8,514 897,516 C893,510 889,500 888,490 C889,486 890.5,483.5 891.6,482 Z" fill="#f7e6ef"/>
<path d="M878.5,511 C878,506 880.5,503.5 882.5,505.5 C883.5,507 883.5,509 883,511 M885.5,511 C885,506 887.5,503.5 889.5,505.5 C890.5,507 890.5,509 890,511" fill="none" stroke="#666" stroke-width="0.8"/>
<path d="M880.5,512 C886,510.5 893,511.5 897.8,515 L901,523 L880,523 Z" fill="#d2e8f5" stroke="#a9c6db" stroke-width="0.6"/>
<circle cx="888.5" cy="516.5" r="2.2" fill="none" stroke="#6d8fb3" stroke-width="0.8"/>
<circle cx="892.5" cy="518" r="1.6" fill="none" stroke="#6d8fb3" stroke-width="0.7"/>
<rect x="911" y="510.5" width="9.5" height="22" rx="4.7" transform="rotate(22 915.7 521.5)" fill="#e84c4f"/>
</svg>
</body></html>
